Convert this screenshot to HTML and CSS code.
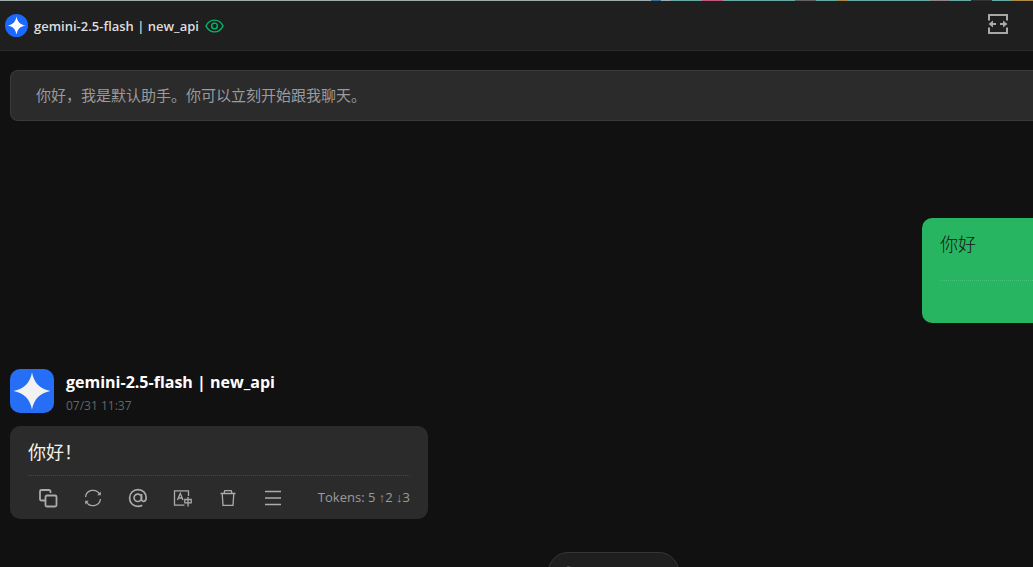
FILE: index.html
```html
<!DOCTYPE html>
<html lang="zh-CN">
<head>
    <meta charset="UTF-8">
    <meta name="viewport" content="width=device-width, initial-scale=1">
    <title>gemini-2.5-flash | new_api</title>
    <link rel="stylesheet" href="styles.css">
</head>
<body>
    <div class="window-edge"></div>
    <header class="topbar">
        <button class="model-button">
            <svg class="model-logo" viewBox="0 0 24 24">
                <circle cx="12" cy="12" r="12" fill="#1c69ff"/>
                <path d="M12 2.500C13 8.200 15.800 11 21.500 12C15.800 13 13 15.800 12 21.500C11 15.800 8.200 13 2.500 12C8.200 11 11 8.200 12 2.500Z" fill="#fff"/>
            </svg>
            <span class="model-name">gemini-2.5-flash | new_api</span>
            <svg class="vision-icon" viewBox="0 0 20 14" fill="none" stroke="#00b96b" stroke-width="1.500">
                <path d="M1 7C3 3 6 0.800 10 0.800S17 3 19 7C17 11 14 13.200 10 13.200S3 11 1 7Z"/>
                <circle cx="10" cy="7" r="3"/>
            </svg>
        </button>
        <button class="expand-button" aria-label="展开">
            <svg viewBox="0 0 20 20" fill="none" stroke="#a8a8a8" stroke-width="2">
                <path d="M1 6.500V1H19V6.500M1 13.500V19H19V13.500"/>
                <path d="M4 10H8M12 10H16"/>
                <path d="M0.500 10L5 6.500V13.500ZM19.500 10L15 6.500V13.500Z" fill="#a8a8a8" stroke="none"/>
            </svg>
        </button>
    </header>

    <main class="chat">
        <div class="prompt">你好，我是默认助手。你可以立刻开始跟我聊天。</div>

        <div class="bubble user-bubble">
            <p class="bubble-text">你好</p>
            <div class="bubble-footer"></div>
        </div>

        <article class="message">
            <div class="message-header">
                <svg class="avatar" viewBox="0 0 44 44">
                    <rect width="44" height="44" fill="#276ef7"/>
                    <path d="M22 3.500C24 14 30 20 40.500 22C30 24 24 30 22 40.500C20 30 14 24 3.500 22C14 20 20 14 22 3.500Z" fill="#f2f2f2"/>
                </svg>
                <div class="message-info">
                    <h2 class="message-name">gemini-2.5-flash | new_api</h2>
                    <time class="message-time">07/31 11:37</time>
                </div>
            </div>
            <div class="bubble model-bubble">
                <p class="bubble-text">你好！</p>
                <div class="bubble-footer">
                    <div class="actions">
                        <button class="action" aria-label="复制">
                            <svg viewBox="0 0 20 20" stroke-width="1.800">
                                <rect x="7.500" y="7.500" width="11" height="11" rx="1.500"/>
                                <path d="M7 12.500H3.500A1.500 1.500 0 0 1 2 11V3.500A1.500 1.500 0 0 1 3.500 2H11A1.500 1.500 0 0 1 12.500 3.500V5"/>
                            </svg>
                        </button>
                        <button class="action" aria-label="重新生成">
                            <svg viewBox="0 0 20 20" stroke-width="1.300">
                                <path d="M2.500 9A7.600 7.600 0 0 1 16.800 6.500M17.500 11A7.600 7.600 0 0 1 3.200 13.500"/>
                                <path d="M17.800 3.500V7.200H14.200ZM2.200 16.500V12.800H5.800Z" fill="currentColor" stroke="none"/>
                            </svg>
                        </button>
                        <button class="action" aria-label="提及模型">
                            <svg viewBox="0 0 20 20" stroke-width="1.700">
                                <circle cx="9.800" cy="9.800" r="3.700"/>
                                <path d="M13.500 6V11.200C13.500 14.300 18.200 14.200 18.200 9.800C18.200 5 14.700 1.600 10 1.600S1.600 5.200 1.600 10S5.200 18.400 10 18.400C11.500 18.400 13 18 14.300 17.300"/>
                            </svg>
                        </button>
                        <button class="action" aria-label="翻译">
                            <svg viewBox="0 0 20 20" stroke-width="1.300">
                                <path d="M15.500 8V2.800H1.500V17.200H11.500"/>
                                <path d="M4.500 12L7.300 5.500L10 12M5.500 10H9"/>
                                <path d="M11.800 11.500H18.200V14.800H11.800ZM15 9V18.500"/>
                            </svg>
                        </button>
                        <button class="action" aria-label="删除">
                            <svg viewBox="0 0 20 20" stroke-width="1.300">
                                <path d="M2.500 5.500H17.500M6 5.300L6.800 2.700H13.200L14 5.300M4.200 5.500L5 17.300H15L15.800 5.500"/>
                            </svg>
                        </button>
                        <button class="action" aria-label="更多">
                            <svg viewBox="0 0 20 20" stroke-width="1.400">
                                <path d="M2 3.500H18M2 10H18M2 16.500H18"/>
                            </svg>
                        </button>
                    </div>
                    <span class="tokens">Tokens: 5 <span class="arrow">↑</span>2 <span class="arrow">↓</span>3</span>
                </div>
            </div>
        </article>

        <div class="floating-row">
            <div class="floating-pill"><span class="pill-dot"></span></div>
        </div>
    </main>
</body>
</html>
```

FILE: styles.css
```css
* {
    box-sizing: border-box;
}

body {
    margin: 0;
    height: 100vh;
    overflow: hidden;
    background-color: #111;
    color: #f2f2e8;
    font-family: "Open Sans", "Noto Sans CJK SC", sans-serif;
}

button {
    padding: 0;
    border: none;
    background: none;
    color: inherit;
    font: inherit;
    cursor: pointer;
}

svg {
    display: block;
}

.window-edge {
    height: 1px;
    background: linear-gradient(to right, #9fabab 63%, #3a6f99 63%, #3a6f99 64%, #9fabab 64%, #9fabab 65%, #66aaa6 65%, #66aaa6 68%, #c05878 68%, #c05878 70%, #66aaa6 70%, #66aaa6 77%, #66605f 77%, #66605f 79%, #66aaa6 79%, #66aaa6 81%, #a88646 81%, #a88646 82%, #66aaa6 82%, #66aaa6 90%, #8f8487 90%, #8f8487 92%, #66aaa6 92%, #66aaa6 94%, #333 94%, #333 96%, #66aaa6 96%, #66aaa6 98%, #b08a45 98%);
}

.topbar {
    display: flex;
    align-items: center;
    justify-content: space-between;
    height: 50px;
    padding: 0 25px 0 5px;
    background-color: #1f1f1f;
    border-bottom: 1px solid #2c2c2c;
}

.model-button {
    display: flex;
    align-items: center;
    gap: 6px;
}

.model-logo {
    width: 23px;
    height: 23px;
}

.model-name {
    color: #dedede;
    font-size: 13px;
    font-weight: 600;
    line-height: 20px;
}

.vision-icon {
    width: 19px;
    height: 14px;
}

.expand-button {
    padding-bottom: 3px;
}

.expand-button svg {
    width: 20px;
    height: 20px;
}

.chat {
    display: flex;
    flex-direction: column;
    padding: 19px 0 0 10px;
}

.prompt {
    padding: 12px 25px;
    background-color: #2b2b2b;
    border: 1px solid #3a3a3a;
    border-right: none;
    border-radius: 8px 0 0 8px;
    color: #9b9b9e;
    font-size: 15px;
    line-height: 25px;
}

.bubble {
    padding: 12px 18px 0;
    border-radius: 10px;
}

.bubble-text {
    margin: 0;
    font-size: 18px;
    line-height: 28px;
}

.bubble-footer {
    display: flex;
    align-items: center;
    justify-content: space-between;
    height: 43px;
    border-top: 1px dotted #454545;
}

.user-bubble {
    align-self: flex-end;
    width: 111px;
    margin-top: 97px;
    padding-right: 0;
    background-color: #28b561;
    border-radius: 10px 0 0 10px;
    color: #141414;
    font-weight: 300;
}

.user-bubble .bubble-text {
    padding-bottom: 22px;
}

.user-bubble .bubble-footer {
    border-color: #4cc17a;
}

.message {
    margin-top: 46px;
}

.message-header {
    display: flex;
    align-items: flex-start;
    gap: 12px;
}

.avatar {
    width: 44px;
    height: 44px;
    border-radius: 10px;
}

.message-name {
    margin: 0;
    color: #fff;
    font-size: 16px;
    font-weight: 700;
    line-height: 26px;
}

.message-time {
    display: block;
    color: #666;
    font-size: 12px;
    font-weight: 500;
    line-height: 22px;
}

.model-bubble {
    width: 418px;
    max-width: 100%;
    margin-top: 9px;
    background-color: #2b2b2b;
}

.model-bubble .bubble-text {
    padding-bottom: 9px;
}

.model-bubble .bubble-footer {
    height: 44px;
}

.actions {
    display: flex;
    gap: 25px;
    padding-left: 10px;
}

.action {
    color: #ababab;
}

.action svg {
    width: 20px;
    height: 20px;
    fill: none;
    stroke: currentColor;
}

.tokens {
    color: #9b9b9e;
    font-size: 13px;
    font-weight: 500;
    line-height: 20px;
    white-space: nowrap;
}

.arrow {
    font-family: "Liberation Sans", sans-serif;
}

.floating-row {
    display: flex;
    justify-content: center;
    margin-top: 33px;
    padding-left: 183px;
}

.floating-pill {
    width: 131px;
    height: 40px;
    padding: 13px 16px;
    background-color: #1f1f1f;
    border: 1px solid #363636;
    border-radius: 20px;
}

.pill-dot {
    display: block;
    width: 7px;
    height: 7px;
    border: 1px solid #555;
    border-radius: 50%;
}
```
